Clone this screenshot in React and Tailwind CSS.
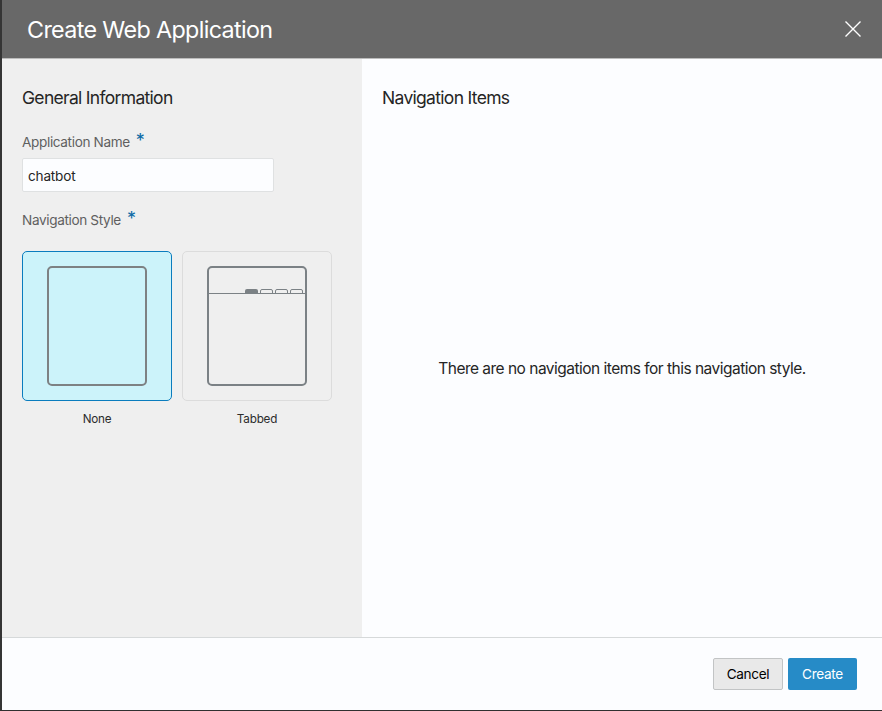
function Required() {
  return <span className="mb-0.5 ml-1.5 h-5 text-[18px] leading-5 tracking-normal text-[#0b6aa6]">*</span>;
}

function FieldLabel({ children }) {
  return (
    <div className="flex h-5 items-center text-[13.6px] leading-5 tracking-[-0.36px] text-[#5f5f5f]">
      <span>{children}</span>
      <Required />
    </div>
  );
}

function StyleOption({ label, selected, children }) {
  return (
    <div className="flex w-[150px] flex-col items-center">
      <div
        className={
          selected
            ? "flex h-[150px] w-[150px] items-center justify-center rounded-[5px] border border-[#0a7cbe] bg-[#ccf3fa]"
            : "flex h-[150px] w-[150px] items-center justify-center rounded-[5px] border border-[#dcdcdc] bg-[#efefef]"
        }
      >
        {children}
      </div>
      <span className="mt-2.5 text-[11.7px] leading-4 tracking-[-0.2px] text-[#2c2c2c]">{label}</span>
    </div>
  );
}

function TabbedIcon() {
  return (
    <svg width="100" height="120" viewBox="0 0 100 120" fill="none" stroke="#7b8185">
      <rect x="1" y="1" width="98" height="118" rx="4" strokeWidth="2" />
      <path d="M2 27.5H98" />
      <path d="M38 27V25a2 2 0 0 1 2-2h9a2 2 0 0 1 2 2v2z" fill="#7b8185" stroke="none" />
      <path d="M53.500 27V25a1.500 1.500 0 0 1 1.500-1.500h9a1.500 1.500 0 0 1 1.500 1.500v2" />
      <path d="M68.500 27V25a1.500 1.500 0 0 1 1.500-1.500h9a1.500 1.500 0 0 1 1.500 1.500v2" />
      <path d="M83.500 27V25a1.500 1.500 0 0 1 1.500-1.500h9a1.500 1.500 0 0 1 1.500 1.500v2" />
    </svg>
  );
}

export default function App() {
  return (
    <div className="flex h-[711px] w-[882px] flex-col overflow-hidden border-b border-l-2 border-b-[#303030] border-l-[#353535] bg-[#fcfdff] font-['Inter',sans-serif] text-[#252525]">
      <header className="flex h-[59px] shrink-0 items-center justify-between border-b border-[#bcbcbc] bg-[#686868] pr-[21px] pl-[25px]">
        <h1 className="pt-0.5 text-[23.3px] leading-8 font-normal tracking-[-0.64px] text-white">
          Create Web Application
        </h1>
        <button aria-label="Close">
          <svg width="16" height="16" viewBox="0 0 16 16" stroke="#fff" strokeWidth="1.4" fill="none">
            <path d="M.5 .5 15.500 15.500M15.500 .5 .5 15.500" />
          </svg>
        </button>
      </header>
      <main className="flex h-[578px] shrink-0">
        <section className="w-[360px] bg-[#efefef] px-5 pt-[27px]">
          <h2 className="text-[17.5px] leading-6 tracking-[-0.69px]">General Information</h2>
          <div className="mt-[22px]">
            <FieldLabel>Application Name</FieldLabel>
            <input
              defaultValue="chatbot"
              className="mt-1.5 block h-[34px] w-[252px] rounded-[2px] border border-[#dfe1e2] bg-[#fcfdff] px-[5px] pt-0.5 text-[13.6px] tracking-[-0.2px] text-[#252525] outline-none"
            />
          </div>
          <div className="mt-[18px]">
            <FieldLabel>Navigation Style</FieldLabel>
            <div className="mt-[21px] flex gap-2.5">
              <StyleOption label="None" selected>
                <div className="h-[120px] w-[100px] rounded-[5px] border-2 border-[#7d8183]" />
              </StyleOption>
              <StyleOption label="Tabbed">
                <TabbedIcon />
              </StyleOption>
            </div>
          </div>
        </section>
        <section className="flex flex-1 flex-col px-5 pt-[27px]">
          <h2 className="text-[17.5px] leading-6 tracking-[-0.69px]">Navigation Items</h2>
          <p className="mt-[247px] text-center text-[15.5px] leading-6 tracking-[-0.515px]">
            There are no navigation items for this navigation style.
          </p>
        </section>
      </main>
      <footer className="flex flex-1 items-start justify-end gap-[5px] border-t border-[#d6d9da] pt-5 pr-[25px]">
        <button className="h-8 w-[70px] rounded-[2px] border border-[#c2c4c5] bg-[#e9e9e9] text-[13.6px] tracking-[-0.36px] text-black">
          Cancel
        </button>
        <button className="h-8 w-[69px] rounded-[2px] bg-[#268bc7] text-[13.6px] tracking-[-0.3px] text-white">
          Create
        </button>
      </footer>
    </div>
  );
}
